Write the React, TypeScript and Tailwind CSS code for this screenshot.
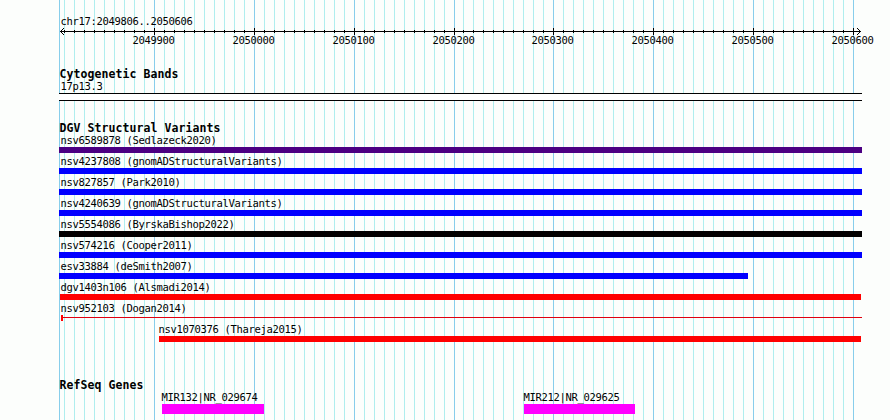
const MINOR = [
  ...Array.from({ length: 40 }, (_, i) => 64 + i * 10),
  ...Array.from({ length: 40 }, (_, i) => 463 + i * 10),
];
const MAJOR = [154, 254, 354, 454, 553, 653, 753, 853];

const TEXT = "font-['DejaVu_Sans_Mono',monospace] text-[10.5px] leading-[12px] tracking-[-0.321px] whitespace-pre text-black";

function Grid() {
  return (
    <svg className="absolute inset-0" width="890" height="420" shapeRendering="crispEdges">
      {MINOR.map((x) => (
        <rect key={x} x={x} y="0" width="1" height="420" fill="#afeeee" />
      ))}
      {[59, ...MAJOR].map((x) => (
        <rect key={x} x={x} y="0" width="1" height="420" fill="#87ceeb" />
      ))}
    </svg>
  );
}

function Axis() {
  return (
    <svg className="block h-[8px] w-[890px]" viewBox="0 27 890 8" shapeRendering="crispEdges">
      <rect x="60" y="31" width="801" height="1" />
      {MINOR.map((x) => (
        <rect key={x} x={x} y="30" width="1" height="3" />
      ))}
      {MAJOR.map((x) => (
        <rect key={x} x={x} y="28" width="1" height="7" />
      ))}
      {[1, 2, 3].map((d) => (
        <g key={d}>
          <rect x={60 + d} y={31 - d} width="1" height="1" />
          <rect x={60 + d} y={31 + d} width="1" height="1" />
          <rect x={860 - d} y={31 - d} width="1" height="1" />
          <rect x={860 - d} y={31 + d} width="1" height="1" />
        </g>
      ))}
    </svg>
  );
}

function Title({ children }: { children: string }) {
  return (
    <h2 className="h-[13px] pl-[0.5px] font-['DejaVu_Sans_Mono',monospace] text-[11.5px] leading-[13px] font-bold tracking-[0.077px] whitespace-pre text-black">
      {children}
    </h2>
  );
}

function Variant({ name, bar, indent = "pl-[1.5px]" }: { name: string; bar: string; indent?: string }) {
  return (
    <div className="h-[21px]">
      <div className={`h-3 ${TEXT} ${indent}`}>{name}</div>
      <div className={`mt-px h-1.5 ${bar}`} />
    </div>
  );
}

function Gene({ name, bar }: { name: string; bar: string }) {
  return (
    <div>
      <div className={`h-3 pl-[0.5px] ${TEXT}`}>{name}</div>
      <div className={`mt-px ml-px h-2.5 bg-[#ff00ff] ${bar}`} />
    </div>
  );
}

export default function App() {
  return (
    <div className="relative h-[420px] w-[890px] overflow-hidden bg-[#fcfefc]">
      <Grid />
      <main className="relative">
        <div className="h-[27px] pt-[15px] pl-[60.5px]">
          <div className={TEXT}>chr17:2049806..2050606</div>
        </div>
        <Axis />
        <div className={`-mt-px flex h-[34px] pl-[132.5px] ${TEXT}`}>
          <span className="w-[100px]">2049900</span>
          <span className="w-[100px]">2050000</span>
          <span className="w-[100px]">2050100</span>
          <span className="w-[99px]">2050200</span>
          <span className="w-[100px]">2050300</span>
          <span className="w-[100px]">2050400</span>
          <span className="w-[100px]">2050500</span>
          <span>2050600</span>
        </div>
        <section className="ml-[59px] h-[54px] w-[803px]">
          <Title>Cytogenetic Bands</Title>
          <div className={`-mt-px h-[13px] pl-[1.5px] ${TEXT}`}>17p13.3</div>
          <div className="h-2 border-y border-black bg-white" />
        </section>
        <section className="ml-[59px] h-[257px] w-[803px]">
          <Title>DGV Structural Variants</Title>
          <div className="-mt-px">
            <Variant name="nsv6589878 (Sedlazeck2020)" bar="bg-[#4b0082]" />
            <Variant name="nsv4237808 (gnomADStructuralVariants)" bar="bg-[#0000ff]" />
            <Variant name="nsv827857 (Park2010)" bar="bg-[#0000ff]" />
            <Variant name="nsv4240639 (gnomADStructuralVariants)" bar="bg-[#0000ff]" />
            <Variant name="nsv5554086 (ByrskaBishop2022)" bar="bg-black" />
            <Variant name="nsv574216 (Cooper2011)" bar="bg-[#0000ff]" />
            <Variant name="esv33884 (deSmith2007)" bar="w-[689px] bg-[#0000ff]" />
            <Variant name="dgv1403n106 (Alsmadi2014)" bar="ml-px w-[801px] bg-[#ff0000]" />
            <div className="h-[21px]">
              <div className={`h-3 pl-[1.5px] ${TEXT}`}>nsv952103 (Dogan2014)</div>
              <div className="mt-px ml-[2px] flex h-1.5 items-start">
                <div className="h-1.5 w-0.5 bg-[#ff0000]" />
                <div className="mt-0.5 h-px flex-1 bg-[#e00010]" />
              </div>
            </div>
            <Variant name="nsv1070376 (Thareja2015)" indent="pl-[99.5px]" bar="ml-[100px] w-[702px] bg-[#ff0000]" />
          </div>
        </section>
        <section>
          <div className="pl-[59px]">
            <Title>RefSeq Genes</Title>
          </div>
          <div className="-mt-px flex pl-[161px]">
            <div className="w-[362px]">
              <Gene name="MIR132|NR_029674" bar="w-[102px]" />
            </div>
            <Gene name="MIR212|NR_029625" bar="w-[111px]" />
          </div>
        </section>
      </main>
    </div>
  );
}
